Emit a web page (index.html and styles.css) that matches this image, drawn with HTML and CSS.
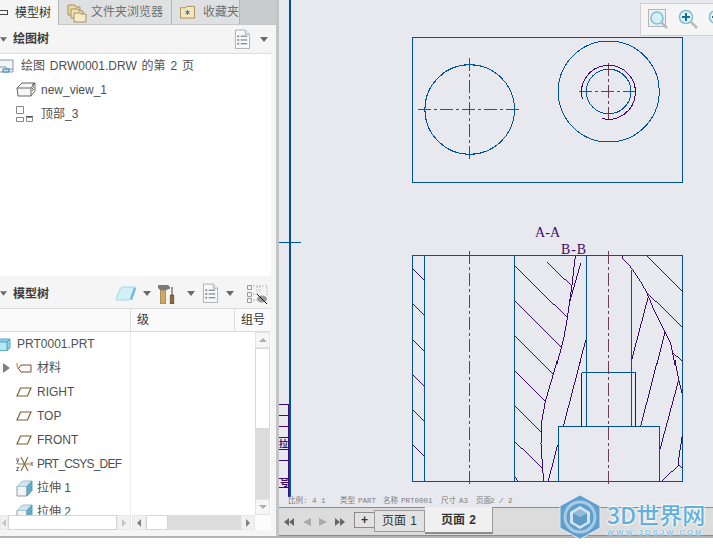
FILE: index.html
```html
<!DOCTYPE html>
<html lang="zh">
<head>
<meta charset="utf-8">
<title>模型树</title>
<link rel="stylesheet" href="styles.css">
</head>
<body>
<svg class="defs" width="0" height="0">
  <symbol id="plane" viewBox="0 0 16 10"><path d="M4.500 1H15L11.500 9H1Z" fill="none" stroke="#7d6236" stroke-width="1.200"/></symbol>
  <symbol id="doc" viewBox="0 0 18 22"><path d="M1.500 1H12L16.500 5.500V20.500H1.500Z" fill="#f6f8f9" stroke="#a9b0b5"/><path d="M12 1V5.500H16.500" fill="#dfe4e7" stroke="#a9b0b5"/><path d="M7 7.500H14M7 11.500H14M7 15.500H14" stroke="#5a6670"/><path d="M3.500 7.500h2M3.500 11.500h2M3.500 15.500h2" stroke="#8a949c" stroke-width="2"/></symbol>
  <symbol id="solid" viewBox="0 0 17 17"><path d="M1 6.500H11V16H1Z" fill="#f4f4f4" stroke="#9a9a9a"/><path d="M1 6.500L6.500 1H16L11 6.500Z" fill="#cfe6ef" stroke="#9fc3d2"/><path d="M11 6.500L16 1V10.500L11 16Z" fill="#62acc9" stroke="#5b9fba"/></symbol>
  <symbol id="caret" viewBox="0 0 8 5"><path d="M0 0H8L4 5Z" fill="#6a6a6a"/></symbol>
</svg>
<div class="app">
  <div class="main">
    <aside class="side">
      <nav class="tabs">
        <div class="tab tab-active">
          <span class="tab-mini"></span>模型树
        </div>
        <div class="tab tab-files">
          <svg class="ico-folders" viewBox="0 0 20 20" width="20" height="20"><path d="M1 2H8L9 4H13V12H1Z" fill="#e9d9a6" stroke="#a6905c"/><path d="M4 6H11L12 8H16V15H4Z" fill="#efe2b8" stroke="#a6905c"/><path d="M7 10H13L14 11H19V19H7Z" fill="#f6ebc6" stroke="#a6905c"/></svg>
          文件夹浏览器
        </div>
        <div class="tab tab-fav">
          <svg class="ico-fav" viewBox="0 0 16 14" width="16" height="14"><path d="M.5 2.500H6L7 1H15.500V13.500H.5Z" fill="#f4e7bd" stroke="#a6905c"/><path d="M8 5V10M5.800 6.200L10.200 8.800M10.200 6.200L5.800 8.800" stroke="#1b6aa0"/></svg>
          收藏夹
        </div>
        <div class="tab-rest"></div>
      </nav>
      <div class="panel">
        <header class="phead phead-top">
          <svg class="caret-head" width="7" height="5"><use href="#caret"/></svg>
          <b class="ptitle">绘图树</b>
          <svg class="ico-doc" width="17" height="21"><use href="#doc"/></svg>
          <svg class="caret-doc" width="8" height="5"><use href="#caret"/></svg>
        </header>
        <div class="drawtree">
          <div class="row row-root">
            <svg class="ico-sheet" viewBox="0 0 14 14" width="14" height="14"><path d="M0 1H13V13H0" fill="#f2f4f6" stroke="#8c98a2"/><path d="M0 8H6V13M6 10H13" fill="none" stroke="#8c98a2"/><path d="M3 10H9V13H3Z" fill="#bfe0ef" stroke="#2b88b8"/></svg>
            绘图 DRW0001.DRW 的第 2 页
          </div>
          <div class="row row-child">
            <svg class="ico" viewBox="0 0 20 16" width="20" height="16"><path d="M1 6L6 1H19L15 6V14H2Z" fill="#f7f7f7" stroke="#666"/><path d="M1 6H15M15 14L19 9V1M16 3L18 1M16 5L18 3M16 7L18 5M16 9L18 7" fill="none" stroke="#666"/></svg>
            new_view_1
          </div>
          <div class="row row-child">
            <svg class="ico" viewBox="0 0 18 16" width="18" height="16"><path d="M.5.500H7.500V7.500H.5ZM.5 11.500H7.500V15.500H.5ZM10.500 11.500H16.500V15.500H10.500Z" fill="#fafafa" stroke="#888"/><path d="M10 10.500H17" stroke="#555"/></svg>
            顶部_3
          </div>
        </div>
        <header class="phead phead-model">
          <svg class="caret-head" width="7" height="5"><use href="#caret"/></svg>
          <b class="ptitle">模型树</b>
          <div class="tools">
            <svg class="t-solid" viewBox="0 0 21 15" width="21" height="15"><path d="M1 13L5 3Q6 1 8 1H20.500L16.500 12Q16 14 14 14H3Q1 14 1 13Z" fill="#d2f0f8" stroke="#a5d8e8"/><path d="M16 13.500L20 2" stroke="#6fbcd6" stroke-width="2.500"/></svg>
            <svg class="tcaret tc-a" width="8" height="5"><use href="#caret"/></svg>
            <svg class="t-tools" viewBox="0 0 18 20" width="18" height="20"><path d="M1 1H11L13 3V5H11L10 6H3L1 4Z" fill="#7b7b7b"/><path d="M3.500 6H8.500V20H3.500Z" fill="#cfa760" stroke="#967440" stroke-width=".7"/><path d="M14 3H16V11H14Z" fill="#999"/><path d="M13.300 11H16.700V20H13.300Z" fill="#8e6c33" stroke="#51401f" stroke-width=".7"/></svg>
            <svg class="tcaret tc-b" width="8" height="5"><use href="#caret"/></svg>
            <svg class="t-doc" width="17" height="21"><use href="#doc"/></svg>
            <svg class="tcaret tc-c" width="8" height="5"><use href="#caret"/></svg>
            <svg viewBox="0 0 21 20" width="21" height="20"><path d="M.5 1.500h4v4h-4zM.5 8.500h4v4h-4zM.5 14.500h4v4h-4z" fill="#f2f2f2" stroke="#999"/><path d="M6 2H20V12M6 10H11M6 16H10M13 2V9M10 2V9" fill="none" stroke="#bbb" stroke-dasharray="2 1"/><ellipse cx="15" cy="15" rx="5" ry="3.500" fill="#9a9a9a"/><path d="M10 10L20 20" stroke="#111"/></svg>
          </div>
        </header>
        <div class="cols">
          <span class="col col-name"></span>
          <span class="col col-lvl">级</span>
          <span class="col col-grp">组号</span>
        </div>
        <div class="treewrap">
          <div class="tree">
            <div class="row row-prt">
              <svg class="ico-prt" viewBox="0 0 14 13" width="14" height="13"><path d="M0 4L3 1H13L10 4ZM10 4L13 1V10L10 12.500Z" fill="#8ed2ea" stroke="#5aa8c8"/><path d="M0 4H10V12.500H0Z" fill="#b8e6f5" stroke="#5aa8c8"/></svg>
              PRT0001.PRT
            </div>
            <div class="row row-item">
              <span class="expand"></span>
              <svg class="ico-tag" viewBox="0 0 16 12" width="16" height="12"><path d="M1 1C1 6 2 7 5 8" fill="none" stroke="#d79a2a" stroke-width="1.300"/><path d="M5 3H15V10H5L2.500 6.500Z" fill="#fbfbfb" stroke="#7c4a3a"/></svg>
              材料
            </div>
            <div class="row row-item"><svg class="ico-plane" width="16" height="10"><use href="#plane"/></svg>RIGHT</div>
            <div class="row row-item"><svg class="ico-plane" width="16" height="10"><use href="#plane"/></svg>TOP</div>
            <div class="row row-item"><svg class="ico-plane" width="16" height="10"><use href="#plane"/></svg>FRONT</div>
            <div class="row row-item row-tight">
              <svg class="ico-csys" viewBox="0 0 18 16" width="18" height="16"><path d="M2 8H14M5 1L12 15M12 1L5 15" stroke="#8c7346" stroke-width="1.200" fill="none"/><text x="0" y="6" class="csys-label">y</text><text x="0" y="15" class="csys-label">z</text><text x="14" y="10" class="csys-label">x</text></svg>
              PRT_CSYS_DEF
            </div>
            <div class="row row-item"><svg class="ico-solid" width="17" height="17"><use href="#solid"/></svg>拉伸 1</div>
            <div class="row row-item"><svg class="ico-solid" width="17" height="17"><use href="#solid"/></svg>拉伸 2</div>
          </div>
          <div class="colrule colrule-a"></div>
          <div class="vscroll">
            <span class="sb-btn"><i class="arr arr-up"></i></span>
            <span class="sb-thumb"></span>
            <span class="sb-track"></span>
            <span class="sb-btn"><i class="arr arr-down"></i></span>
          </div>
        </div>
        <div class="hscrolls">
          <div class="hscroll hs-a">
            <span class="hb hb-l"><i class="arr arr-left arr-light"></i></span>
            <span class="hthumb hthumb-a"></span>
            <span class="hb"><i class="arr arr-right arr-light"></i></span>
          </div>
          <div class="hscroll hs-b">
            <span class="hb"><i class="arr arr-left"></i></span>
            <span class="hthumb hthumb-b"></span>
            <span class="htrack"></span>
            <span class="hb"><i class="arr arr-right"></i></span>
          </div>
        </div>
      </div>
    </aside>
    <section class="work">
      <div class="sheet">
        <svg class="drawing" viewBox="279 0 434 507" width="434" height="507">
          <g class="table">
            <path d="M279 404.500H288.500M279 415.500H288.500M279 426.500H288.500M279 437.500H288.500M279 449.500H288.500M279 460.500H288.500M279 478.500H288.500M279 487.500H288.500M288.500 404V497"/>
            <text x="279" y="447" class="tbl-text">拉</text>
            <text x="280" y="486" class="tbl-text">号</text>
          </g>
          <g class="thick">
            <path d="M290 0V497"/>
            <path d="M279 242.500H301"/>
          </g>
          <g class="blue">
            <rect x="412.500" y="37.500" width="270" height="145"/>
            <circle cx="469.700" cy="109.500" r="44.800"/>
            <circle cx="608.700" cy="91.500" r="50.500"/>
            <circle cx="608.700" cy="91.500" r="22.300"/>
            <rect x="412.500" y="255.500" width="270" height="226"/>
            <path d="M424.500 255.500V481.500M514.500 255.500V481.500M586.500 255.500V426.500M631.500 270V426.500"/>
            <rect x="558.500" y="426.500" width="101" height="55"/>
            <path d="M581.500 372.500H635.500"/>
          </g>
          <g class="center">
            <path d="M418 109.500H522M469.500 58V162"/>
            <path d="M579 91.500H638M608.500 63V121"/>
            <path d="M469.500 251V486M608.500 251V486"/>
          </g>
          <g class="purple">
            <path d="M582.300 99A27 27 0 1 1 602 118.500"/>
            <path d="M581.500 372.500V426.500M635.500 372.500V426.500"/>
          </g>
          <g transform="translate(400 215) scale(.33333)" class="hatch">
            <path d="M38 162L73 195M38 267L73 300M38 375L73 408M345 153L502 308M345 258L484 396M345 363L432 450M441 141L513 211"/>
            <path d="M526 122L516 210L508 265L502 310L492 365L484 398L470 450M542 145L508 265M557 375L538 450"/>
            <path d="M667 122L668 130L695 160L725 205L740 232L760 280L795 350L812 385L825 450M740 122L847 230M740 232L847 337M818 412L847 440M745 245L695 435M795 350L770 450"/>
          </g>
          <g transform="translate(400 360) scale(.33333)" class="hatch">
            <path d="M38 45L73 78M38 150L73 183M38 255L73 288M345 33L436 124M345 138L423 215M345 245L428 326M418 0L460 42M345 352L356 364"/>
            <path d="M472 0L460 42L436 124L425 185L423 250L428 326L431 364M542 0L490 199M473 255L445 362"/>
            <path d="M773 0L722 199M825 0L836 60L805 175L780 268M836 60L846 100M786 364L836 315L847 325M847 225L837 290V315"/>
          </g>
          <text x="535" y="237" class="label" textLength="25">A-A</text>
          <text x="561" y="254" class="label" textLength="25">B-B</text>
          <g class="status">
            <text x="288" y="503">比例: 4 1</text>
            <text x="340" y="503">类型</text>
            <text x="358" y="503">PART</text>
            <text x="383" y="503">名称</text>
            <text x="401" y="503">PRT0001</text>
            <text x="441" y="503">尺寸</text>
            <text x="459" y="503">A3</text>
            <text x="476" y="503">页面</text>
            <text x="490" y="503">2 / 2</text>
          </g>
        </svg>
        <div class="zoombar">
          <svg viewBox="0 0 20 20" width="20" height="20"><rect x=".5" y=".5" width="17" height="17" fill="#eef1f3" stroke="#b4b4b4"/><circle cx="9" cy="9" r="6" fill="#d5f0f8" stroke="#7cc0d6" stroke-width="1.500"/><path d="M13 13L19 19" stroke="#b8bcc0" stroke-width="2.500"/></svg>
          <svg viewBox="0 0 20 20" width="20" height="20"><circle cx="8" cy="8" r="6.500" fill="#e4f5fa" stroke="#7cc0d6" stroke-width="1.500"/><path d="M8 4V12M4 8H12" stroke="#11719c" stroke-width="2"/><path d="M12.500 12.500L19 19" stroke="#b8bcc0" stroke-width="2.500"/></svg>
          <svg viewBox="0 0 20 20" width="20" height="20"><circle cx="8" cy="8" r="6.500" fill="#e4f5fa" stroke="#7cc0d6" stroke-width="1.500"/><path d="M4 8H12" stroke="#11719c" stroke-width="2"/><path d="M12.500 12.500L19 19" stroke="#b8bcc0" stroke-width="2.500"/></svg>
        </div>
      </div>
      <div class="pagebar">
        <div class="pnav">
          <i class="nav nav-dl"></i><i class="nav nav-dl2"></i>
          <i class="nav nav-l"></i>
          <i class="nav nav-r"></i>
          <i class="nav nav-dr"></i><i class="nav nav-dr2"></i>
        </div>
        <button class="padd">+</button>
        <div class="ptab">页面 1</div>
        <div class="ptab ptab-active">页面 2</div>
      </div>
    </section>
  </div>
  <div class="foot"></div>
  <div class="wm">
    <svg viewBox="0 0 42 46" width="42" height="46"><path d="M21 1L41 12V34L21 45L1 34V12Z" fill="#5f9fce" stroke="#dfeaf3"/><circle cx="21" cy="23" r="15" fill="none" stroke="#a9cbe4" stroke-width="3"/><path d="M21 12L31 18V29L21 35L11 29V18Z" fill="#d6e5f1"/><path d="M21 15L28 19L21 23L14 19Z" fill="#8fbbdc"/><path d="M14 19L21 23V32L14 28ZM28 19L21 23V32L28 28Z" fill="#5f9bc9"/></svg>
    <div class="wm-text">
      <div class="wm-big">3D世界网</div>
      <div class="wm-small">WWW.3DSJW.COM</div>
    </div>
  </div>
</div>
</body>
</html>
```
FILE: styles.css
```css
* { box-sizing: border-box; }
html, body { margin: 0; height: 100%; }
body {
  width: 713px;
  height: 548px;
  overflow: hidden;
  background: #fff;
  font-family: "Liberation Sans", "Noto Sans CJK SC", sans-serif;
  font-size: 12px;
  line-height: 14px;
  color: #505050;
}
.defs { position: absolute; }
.app { position: relative; width: 713px; height: 548px; overflow: hidden; }
.main { display: flex; height: 538px; border-bottom: 2px solid #b4b4b4; }
.foot { height: 10px; }

.side { width: 279px; flex: none; display: flex; flex-direction: column; background: #f5f5f5; border-right: 3px solid #c4c4c4; }
.tabs { display: flex; height: 25px; flex: none; background: #c9cacc; border-bottom: 1px solid #c8c8c8; }
.tab { display: flex; align-items: center; height: 24px; color: #707070; background: #dfe0e2; border-right: 1px solid #b4b4b4; flex: none; white-space: nowrap; }
.tab-active { width: 59px; background: #f5f5f5; color: #333; height: 25px; gap: 7px; position: relative; z-index: 1; }
.tab-mini { width: 8px; height: 5px; border: 1px solid #444; border-left: 0; }
.tab-files { width: 113px; gap: 4px; padding-left: 8px; }
.tab-fav { width: 68px; gap: 8px; padding-left: 8px; }
.tab-rest { flex: 1; }
.ico-folders { margin-top: 1px; }

.panel { width: 271px; flex: 1; display: flex; flex-direction: column; min-height: 0; }
.phead { display: flex; align-items: center; flex: none; background: #f5f5f5; }
.phead-top { height: 29px; border-bottom: 1px solid #dcdcdc; }
.phead-model { height: 33px; padding-top: 3px; border-bottom: 1px solid #dcdcdc; }
.caret-head { flex: none; margin-right: 6px; }
.ptitle { font-size: 12px; color: #3c3c3c; }
.ico-doc { margin-left: auto; }
.caret-doc { margin: 0 3px 0 9px; }
.tools { margin-left: auto; display: flex; align-items: center; margin-right: 3px; }
.tc-a { margin: 0 6px 0 7px; }
.tc-b { margin: 0 7px 0 12px; }
.tc-c { margin: 0 13px 0 7px; }

.drawtree { height: 222px; flex: none; background: #fff; }
.row { display: flex; align-items: center; height: 24px; white-space: nowrap; }
.row-root { gap: 7px; word-spacing: 1.500px; }
.row-child { padding-left: 16px; gap: 5px; }
.row-child:last-child { gap: 7px; }
.row-child .ico { flex: none; }

.cols { display: flex; height: 23px; flex: none; background: #fafafa; border-bottom: 1px solid #dcdcdc; color: #333; }
.col { display: flex; align-items: center; border-right: 1px solid #dcdcdc; }
.col-name { width: 131px; }
.col-lvl { width: 104px; padding-left: 6px; }
.col-grp { width: 36px; padding-left: 6px; border-right: 0; }

.treewrap { position: relative; height: 183px; flex: none; background: #fff; overflow: hidden; display: flex; }
.tree { flex: 1; min-width: 0; overflow: hidden; }
.colrule { position: absolute; top: 0; bottom: 0; width: 1px; background: #ececec; }
.colrule-a { left: 130px; }
.row-prt { gap: 6px; margin-left: -3px; }
.row-item { padding-left: 16px; gap: 5px; position: relative; }
.row-tight { letter-spacing: -.800px; }
.expand { position: absolute; left: 3px; top: 7px; border-left: 7px solid #808080; border-top: 5px solid transparent; border-bottom: 5px solid transparent; }
.ico-plane, .ico-tag { flex: none; }
.ico-csys { flex: none; margin-right: -2px; }
.csys-label { font-size: 6.500px; fill: #222; font-family: "Liberation Sans", sans-serif; }
.ico-solid { flex: none; margin-right: -1px; }

.vscroll { width: 15px; flex: none; margin-right: 1px; display: flex; flex-direction: column; background: #dcdcdc; }
.sb-btn { height: 16px; flex: none; background: #f6f6f6; border: 1px solid #e4e4e4; display: flex; align-items: center; justify-content: center; }
.sb-thumb { height: 81px; flex: none; background: #fff; border: 1px solid #d8d8d8; }
.sb-track { flex: 1; }
.arr { display: block; width: 0; height: 0; }
.arr-up { border: 4px solid transparent; border-top: 0; border-bottom: 4px solid #b0b0b0; }
.arr-down { border: 4px solid transparent; border-bottom: 0; border-top: 4px solid #b0b0b0; }
.arr-left { border: 4px solid transparent; border-left: 0; border-right: 4px solid #808080; }
.arr-right { border: 4px solid transparent; border-right: 0; border-left: 4px solid #808080; }
.arr-left.arr-light { border-right-color: #c4c4c4; }
.arr-right.arr-light { border-left-color: #c4c4c4; }

.hscrolls { display: flex; height: 15px; flex: none; background: #fcfcfc; }
.hscroll { display: flex; height: 15px; }
.hs-a { width: 132px; background: #fff; }
.hs-b { width: 123px; background: #dcdcdc; }
.hb { width: 14px; flex: none; display: flex; align-items: center; justify-content: center; background: #f1f1f1; border: 1px solid #e8e8e8; }
.hb-l { width: 8px; }
.hthumb { background: #fff; border: 1px solid #d4d4d4; }
.hthumb-a { width: 109px; flex: none; }
.hthumb-b { width: 22px; flex: none; }
.htrack { flex: 1; }

.work { flex: 1; display: flex; flex-direction: column; min-width: 0; }
.sheet { position: relative; height: 507px; flex: none; background: #e8e9ee; overflow: hidden; }
.drawing { display: block; shape-rendering: crispEdges; }
.thick path { stroke: #00519c; fill: none; }
.thick path:first-child { stroke-width: 2; }
.thick path:last-child { stroke-width: 1; }
.table path { stroke: #3c0a6e; fill: none; stroke-width: 1; }
.tbl-text { font-size: 9px; fill: #3c0a6e; font-family: "Noto Sans CJK SC", sans-serif; font-weight: 700; }
.blue * { fill: none; stroke: #00519c; stroke-width: 1; }
.center path { fill: none; stroke: #6e3c50; stroke-width: 1; stroke-dasharray: 13 3 3 3; }
.purple path { fill: none; stroke: #3c0a6e; stroke-width: 1; }
.hatch path { fill: none; stroke: #3c0a6e; stroke-width: 3; }
.label { font-family: "Liberation Serif", serif; font-size: 14px; fill: #3c0a6e; }
.status text { font-family: "Liberation Mono", "Noto Sans CJK SC", monospace; font-size: 7.500px; fill: #7d7d7d; }

.zoombar { position: absolute; right: 0; top: 3px; width: 73px; height: 33px; padding: 5px 0 0 7px; display: flex; gap: 10px; background: #f5f5f5; border: 1px solid #cfcfcf; border-right: 0; overflow: hidden; }
.zoombar svg { flex: none; }

.pagebar { height: 29px; flex: none; display: flex; align-items: flex-start; background: #dcdcdc; border-top: 1px solid #8c8c8c; border-bottom: 1px solid #8c8c8c; position: relative; color: #333; }
.pnav { width: 75px; flex: none; height: 27px; position: relative; }
.nav { position: absolute; top: 10px; width: 0; height: 0; border-top: 4px solid transparent; border-bottom: 4px solid transparent; }
.nav-dl { left: 5px; border-right: 5px solid #666; }
.nav-dl2 { left: 10px; border-right: 5px solid #666; }
.nav-l { left: 24px; border-right: 8px solid #aaa; }
.nav-r { left: 40px; border-left: 8px solid #aaa; }
.nav-dr { left: 56px; border-left: 5px solid #666; }
.nav-dr2 { left: 61px; border-left: 5px solid #666; }
.padd { width: 20px; height: 16px; margin-top: 4px; padding: 0; flex: none; background: #e2e2e2; border: 1px solid #8c8c8c; border-right: 0; border-radius: 0; font: 700 12px "Liberation Sans", sans-serif; color: #333; line-height: 12px; }
.ptab { width: 51px; height: 22px; margin-top: 2px; display: flex; align-items: center; justify-content: center; background: #e2e2e2; border: 1px solid #9a9a9a; word-spacing: 1px; }
.ptab-active { width: 68px; height: 27px; margin-top: -1px; background: #f0f0f0; border: 0; border-bottom: 2px solid #8c8c8c; border-right: 1px solid #9a9a9a; font-weight: 700; }

.wm { position: absolute; left: 559px; top: 494px; display: flex; gap: 6px; }
.wm-text { display: flex; flex-direction: column; padding-top: 8px; gap: 2px; }
.wm-big { font: 500 23px/24px "Noto Sans CJK SC", sans-serif; color: #62b0e0; text-shadow: 0 0 2px #fff, 0 0 3px #fff, 0 0 3px #fff; white-space: nowrap; }
.wm-small { font: 700 7.500px/9px "Liberation Sans", sans-serif; letter-spacing: 2.200px; color: #86c2e6; text-shadow: 0 0 2px #fff, 0 0 2px #fff; white-space: nowrap; }
```
